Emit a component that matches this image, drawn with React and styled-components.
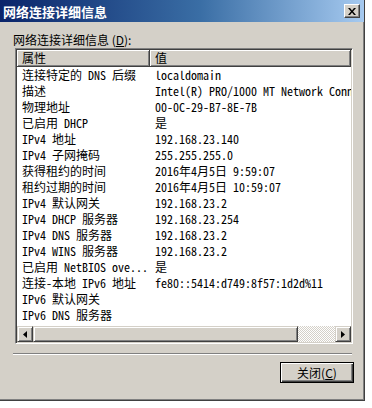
import styled, { createGlobalStyle } from 'styled-components'

const GlobalStyle = createGlobalStyle`
	body {
		margin: 0;
		background: #ffffff;
		font-family: "Noto Sans CJK SC", sans-serif;
	}
`

const rows = [
	['连接特定的 DNS 后缀', 'localdomain'],
	['描述', 'Intel(R) PRO/1000 MT Network Connection'],
	['物理地址', '00-0C-29-B7-8E-7B'],
	['已启用 DHCP', '是'],
	['IPv4 地址', '192.168.23.140'],
	['IPv4 子网掩码', '255.255.255.0'],
	['获得租约的时间', '2016年4月5日 9:59:07'],
	['租约过期的时间', '2016年4月5日 10:59:07'],
	['IPv4 默认网关', '192.168.23.2'],
	['IPv4 DHCP 服务器', '192.168.23.254'],
	['IPv4 DNS 服务器', '192.168.23.2'],
	['IPv4 WINS 服务器', '192.168.23.2'],
	['已启用 NetBIOS ove...', '是'],
	['连接-本地 IPv6 地址', 'fe80::5414:d749:8f57:1d2d%11'],
	['IPv6 默认网关', ''],
	['IPv6 DNS 服务器', ''],
]

const Window = styled.div`
	width: 365px;
	height: 401px;
	background: #d4d0c8;
	box-sizing: border-box;
	border-right: 1px solid #404040;
	border-bottom: 1px solid #404040;
	box-shadow: inset -1px -1px 0 #808080;
	display: flex;
	flex-direction: column;
`

const TitleBar = styled.div`
	height: 22px;
	flex: none;
	display: flex;
	align-items: center;
	justify-content: space-between;
	padding: 0 4px 0 3px;
	background: linear-gradient(to right, #0a246a 0%, #3a6ea5 55%, #a6caf0 100%);
	color: #ffffff;
	font-weight: bold;
	font-size: 13px;
`

const CloseBox = styled.div`
	width: 16px;
	height: 14px;
	box-sizing: border-box;
	background: #d4d0c8;
	border: 1px solid;
	border-color: #ffffff #404040 #404040 #ffffff;
	box-shadow: inset -1px -1px 0 #808080;
	display: flex;
	align-items: center;
	justify-content: center;
`

const Body = styled.div`
	flex: 1;
	display: flex;
	flex-direction: column;
	padding: 10px 11px 0 13px;
`

const Label = styled.div`
	font-size: 12px;
	line-height: 16px;
	color: #000000;
	height: 16px;
`

const ListBox = styled.div`
	margin: 0 0 0 2px;
	width: 338px;
	height: 296px;
	box-sizing: border-box;
	background: #ffffff;
	border: 1px solid;
	border-color: #808080 #ffffff #ffffff #808080;
	box-shadow: inset 1px 1px 0 #404040, inset -1px -1px 0 #d4d0c8;
	padding: 1px;
	display: flex;
	flex-direction: column;
	overflow: hidden;
`

const Rows = styled.div`
	flex: 1;
	overflow: hidden;
	font-family: "Noto Sans Mono CJK SC", "Liberation Mono", "Noto Sans CJK SC", monospace;
	font-size: 12px;
	color: #000000;
`

const Header = styled.div`
	display: flex;
	height: 17px;
	flex: none;
	background: #d4d0c8;
`

const HeaderCell = styled.div`
	width: ${(p) => p.width || 'auto'};
	flex: ${(p) => (p.width ? 'none' : '1')};
	box-sizing: border-box;
	border-right: 1px solid #404040;
	border-bottom: 1px solid #404040;
	box-shadow: inset 1px 1px 0 #ffffff, inset -1px -1px 0 #808080;
	padding-left: 5px;
	font-family: "Noto Sans CJK SC", sans-serif;
	font-size: 12px;
	line-height: 16px;
	white-space: nowrap;
`

const Row = styled.div`
	display: flex;
	height: 16px;
	line-height: 16px;
	white-space: nowrap;
`

const Cell = styled.div`
	width: ${(p) => p.width || 'auto'};
	flex: none;
	box-sizing: border-box;
	padding-left: 5px;
	overflow: hidden;
`

const ScrollBar = styled.div`
	display: flex;
	height: 16px;
	flex: none;
	background-color: #ffffff;
	background-image: repeating-conic-gradient(#d4d0c8 0 25%, #ffffff 0 50%);
	background-size: 2px 2px;
`

const RaisedPart = styled.div`
	width: ${(p) => p.width};
	flex: none;
	height: 16px;
	box-sizing: border-box;
	background: #d4d0c8;
	border: 1px solid;
	border-color: #d4d0c8 #404040 #404040 #d4d0c8;
	box-shadow: inset 1px 1px 0 #ffffff, inset -1px -1px 0 #808080;
	display: flex;
	align-items: center;
	justify-content: center;
`

const Track = styled.div`
	flex: 1;
`

const Separator = styled.div`
	margin: 9px 0 0 0;
	width: 339px;
	border-top: 1px solid #808080;
	border-bottom: 1px solid #ffffff;
`

const Footer = styled.div`
	display: flex;
	justify-content: flex-end;
	padding: 7px 0 0 0;
`

const Button = styled.button`
	width: 74px;
	height: 21px;
	box-sizing: border-box;
	margin-right: -1px;
	padding: 0;
	background: #d4d0c8;
	border: 1px solid #000000;
	box-shadow: inset 1px 1px 0 #ffffff, inset -1px -1px 0 #404040, inset -2px -2px 0 #808080;
	font-family: "Noto Sans CJK SC", sans-serif;
	font-size: 12px;
	color: #000000;
	line-height: 17px;
`

function Arrow({ dir }) {
	const pts = dir === 'left' ? '5,1 1,4.5 5,8' : '1,1 5,4.5 1,8'
	return (
		<svg width="6" height="9" viewBox="0 0 6 9">
			<polygon points={pts} fill="#000" />
		</svg>
	)
}

function App() {
	return (
		<>
			<GlobalStyle />
			<Window>
				<TitleBar>
					<span>网络连接详细信息</span>
					<CloseBox>
						<svg width="8" height="7" viewBox="0 0 8 7">
							<path d="M0 0 L2 0 L4 2.5 L6 0 L8 0 L5 3.5 L8 7 L6 7 L4 4.5 L2 7 L0 7 L3 3.5 Z" fill="#000" />
						</svg>
					</CloseBox>
				</TitleBar>
				<Body>
					<Label>
						网络连接详细信息 (<u>D</u>):
					</Label>
					<ListBox>
						<Header>
							<HeaderCell width="133px">属性</HeaderCell>
							<HeaderCell>值</HeaderCell>
						</Header>
						<Rows>
							{rows.map(([k, v]) => (
								<Row key={k}>
									<Cell width="133px">{k}</Cell>
									<Cell>{v}</Cell>
								</Row>
							))}
						</Rows>
						<ScrollBar>
							<RaisedPart width="16px">
								<Arrow dir="left" />
							</RaisedPart>
							<RaisedPart width="265px" />
							<Track />
							<RaisedPart width="16px">
								<Arrow dir="right" />
							</RaisedPart>
						</ScrollBar>
					</ListBox>
					<Separator />
					<Footer>
						<Button>
							关闭(<u>C</u>)
						</Button>
					</Footer>
				</Body>
			</Window>
		</>
	)
}

export default App
